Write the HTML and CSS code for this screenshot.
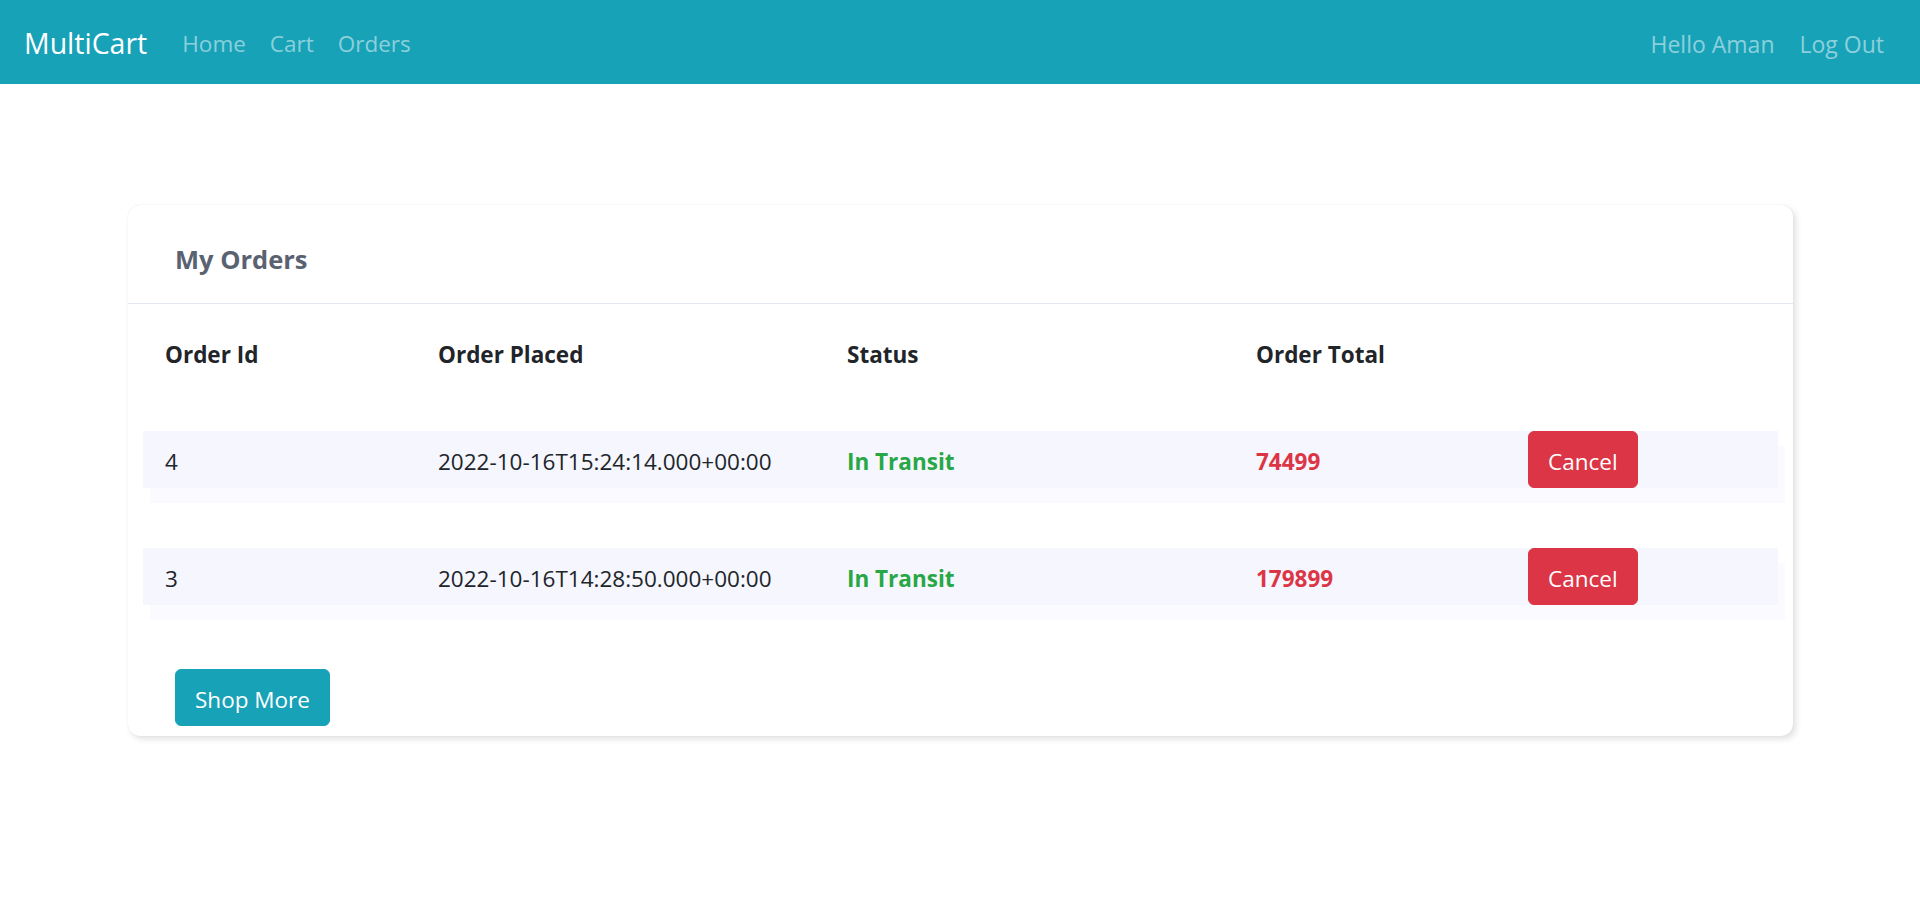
FILE: index.html
```html
<!DOCTYPE html>
<html lang="en">
<head>
<meta charset="utf-8">
<title>MultiCart - My Orders</title>
<link rel="stylesheet" href="styles.css">
</head>
<body>
<nav class="navbar">
  <a class="brand" href="#">MultiCart</a>
  <ul class="nav">
    <li><a class="nav-link" href="#">Home</a></li>
    <li><a class="nav-link" href="#">Cart</a></li>
    <li><a class="nav-link" href="#">Orders</a></li>
  </ul>
  <ul class="nav nav-right">
    <li><a class="nav-link" href="#">Hello Aman</a></li>
    <li><a class="nav-link" href="#">Log Out</a></li>
  </ul>
</nav>

<main class="page">
  <section class="card">
    <header class="card-header">My Orders</header>
    <div class="card-body">
      <div class="orders">
        <div class="row head">
          <div class="cell">Order Id</div>
          <div class="cell">Order Placed</div>
          <div class="cell">Status</div>
          <div class="cell">Order Total</div>
          <div class="cell"></div>
        </div>
        <div class="row item">
          <div class="cell">4</div>
          <div class="cell">2022-10-16T15:24:14.000+00:00</div>
          <div class="cell status">In Transit</div>
          <div class="cell total">74499</div>
          <div class="cell action"><button class="btn btn-danger">Cancel</button></div>
        </div>
        <div class="row item">
          <div class="cell">3</div>
          <div class="cell">2022-10-16T14:28:50.000+00:00</div>
          <div class="cell status">In Transit</div>
          <div class="cell total">179899</div>
          <div class="cell action"><button class="btn btn-danger">Cancel</button></div>
        </div>
      </div>
      <div class="actions">
        <button class="btn btn-info">Shop More</button>
      </div>
    </div>
  </section>
</main>
</body>
</html>
```

FILE: styles.css
```css
* { box-sizing: border-box; }

html, body {
  margin: 0;
  padding: 0;
  background: #ffffff;
}

body {
  font-family: "Open Sans", "Noto Sans", sans-serif;
  font-size: 22.5px;
  line-height: 36px;
  color: #212529;
}

a { text-decoration: none; }

/* Navbar */
.navbar {
  display: flex;
  align-items: center;
  height: 84px;
  padding: 0 24px;
  background: #17a2b8;
}

.brand {
  color: #ffffff;
  font-size: 28.5px;
  line-height: 45px;
  padding-top: 2px;
  margin-right: 23px;
}

.nav {
  display: flex;
  list-style: none;
  margin: 0;
  padding: 0;
}

.nav-right {
  margin-left: auto;
}

.nav-link {
  display: block;
  padding: 14px 12px 10px;
  font-size: 22.5px;
  color: rgba(255, 255, 255, 0.5);
}

.nav-right .nav-link {
  font-size: 23px;
  padding-left: 13px;
  padding-right: 12px;
}

/* Page */
.page {
  padding: 121px 127px 40px 128px;
}

.card {
  background: #ffffff;
  border-radius: 12px;
  box-shadow: 0 0 1px rgba(0, 0, 0, 0.12), 3px 3px 6px rgba(0, 0, 0, 0.12);
}

.card-header {
  padding: 34px 47px 24px;
  font-size: 25.5px;
  line-height: 40px;
  font-weight: 700;
  color: #5a6272;
  border-bottom: 1px solid #e3e8ef;
}

.card-body {
  padding: 22px 15px 10px;
}

.orders {
  display: flex;
  flex-direction: column;
}

.row {
  display: grid;
  grid-template-columns: 276px 409px 409px 273px 1fr;
  align-items: center;
  height: 57px;
}

.head {
  font-weight: 700;
  margin-bottom: 48px;
}

.item {
  background: #f5f6fe;
  box-shadow: 7px 15px 0 #fafaff;
}

.item + .item {
  margin-top: 60px;
}

.cell {
  padding-left: 19px;
  white-space: nowrap;
}

.cell:first-child {
  padding-left: 22px;
}

.item .cell {
  padding-top: 5px;
}

.item .cell.action {
  padding-top: 0;
  padding-left: 18px;
}

.status {
  color: #28a745;
  font-weight: 700;
}

.total {
  color: #dc3545;
  font-weight: 700;
}

.btn {
  font-family: inherit;
  font-size: 22.5px;
  line-height: 37px;
  padding: 11px 19px 7px;
  border: 1px solid transparent;
  border-radius: 6px;
  color: #ffffff;
  cursor: pointer;
  display: inline-block;
  vertical-align: middle;
}

.btn-danger {
  background: #dc3545;
  border-color: #dc3545;
}

.btn-info {
  background: #17a2b8;
  border-color: #17a2b8;
}

.actions {
  padding: 64px 0 0 32px;
}
```
